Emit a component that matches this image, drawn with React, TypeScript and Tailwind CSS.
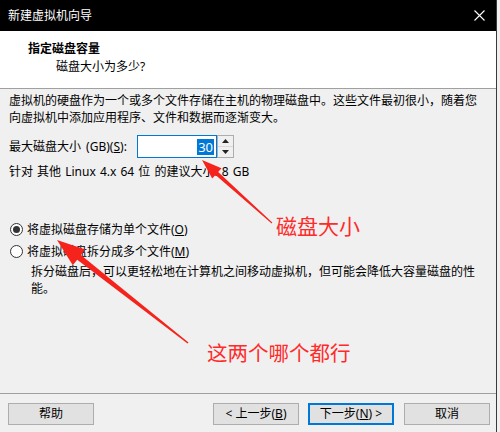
import React from "react";

const FONT = { fontFamily: '"Noto Sans", "Noto Sans CJK SC", sans-serif' };

function arrowPts(tx: number, ty: number, hx: number, hy: number, tailW: number, shaftW: number, headW: number, headL: number) {
  const len = Math.hypot(hx - tx, hy - ty);
  const dx = (hx - tx) / len;
  const dy = (hy - ty) / len;
  const nx = -dy;
  const ny = dx;
  const bx = hx - dx * headL;
  const by = hy - dy * headL;
  const p = (x: number, y: number) => `${x.toFixed(1)},${y.toFixed(1)}`;
  return [
    p(tx + (nx * tailW) / 2, ty + (ny * tailW) / 2),
    p(bx + (nx * shaftW) / 2, by + (ny * shaftW) / 2),
    p(bx + (nx * headW) / 2, by + (ny * headW) / 2),
    p(hx, hy),
    p(bx - (nx * headW) / 2, by - (ny * headW) / 2),
    p(bx - (nx * shaftW) / 2, by - (ny * shaftW) / 2),
    p(tx - (nx * tailW) / 2, ty - (ny * tailW) / 2),
  ].join(" ");
}

function Radio({ checked }: { checked?: boolean }) {
  return (
    <span className="w-[13px] h-[13px] rounded-full border border-[#333] bg-white flex items-center justify-center shrink-0">
      {checked && <span className="w-[7px] h-[7px] rounded-full bg-[#333]" />}
    </span>
  );
}

function Btn({ children, primary }: { children: React.ReactNode; primary?: boolean }) {
  return (
    <div
      className={
        "w-[86px] h-[22px] flex items-center justify-center bg-[#e1e1e1] text-[12px] text-black " +
        (primary ? "border-2 border-[#0078d7]" : "border border-[#adadad]")
      }
    >
      {children}
    </div>
  );
}

export default function App() {
  return (
    <div className="relative w-[500px] h-[432px] flex overflow-hidden bg-[#f0f0f0]" style={FONT}>
      <div className="w-[497px] h-full flex flex-col border-r border-[#3a3a3a]">
        {/* title bar */}
        <div className="h-[31px] bg-black flex items-center justify-between pl-[8px] pr-[11px] text-white text-[12px]">
          <span>新建虚拟机向导</span>
          <svg width="11" height="11" viewBox="0 0 11 11">
            <path d="M0.5 0.5 L10.5 10.5 M10.5 0.5 L0.5 10.5" stroke="white" strokeWidth="1.1" />
          </svg>
        </div>
        {/* header */}
        <div className="h-[58px] bg-white border-b border-[#a0a0a0] flex flex-col text-[12px] text-black">
          <div className="pl-[28px] pt-[9px] font-bold leading-[17px]">指定磁盘容量</div>
          <div className="pl-[56px] pt-[1px] leading-[17px]">磁盘大小为多少?</div>
        </div>
        {/* body */}
        <div className="flex-1 flex flex-col pl-[9px] text-[12px] text-black leading-[17px]">
          <div className="mt-[3px]">
            <div>虚拟机的硬盘作为一个或多个文件存储在主机的物理磁盘中。这些文件最初很小，随着您</div>
            <div>向虚拟机中添加应用程序、文件和数据而逐渐变大。</div>
          </div>
          <div className="mt-[9px] flex items-center h-[23px]">
            <span className="w-[128px] [word-spacing:2px]">
              最大磁盘大小 (GB)(<span className="underline">S</span>):
            </span>
            <div className="w-[80px] h-[23px] bg-white border border-[#0078d7] flex items-center justify-end pr-[2px]">
              <span className="bg-[#0078d7] text-white text-[13px] leading-[16px] px-[1px]">30</span>
            </div>
            <div className="w-[17px] h-[23px] border border-[#adadad] bg-[#f0f0f0] flex flex-col">
              <div className="flex-1 flex items-center justify-center border-b border-[#d8d8d8]">
                <svg width="7" height="4" viewBox="0 0 7 4"><path d="M0 4 L3.5 0 L7 4 Z" fill="#222" /></svg>
              </div>
              <div className="flex-1 flex items-center justify-center">
                <svg width="7" height="4" viewBox="0 0 7 4"><path d="M0 0 L3.5 4 L7 0 Z" fill="#222" /></svg>
              </div>
            </div>
          </div>
          <div className="mt-[5px] [word-spacing:1px]">针对 其他 Linux 4.x 64 位 的建议大小: 8 GB</div>
          <div className="mt-[41px] flex items-center gap-[4px] pl-[1px]">
            <Radio checked />
            <span>
              将虚拟磁盘存储为单个文件(<span className="underline">O</span>)
            </span>
          </div>
          <div className="mt-[5px] flex items-center gap-[4px] pl-[1px]">
            <Radio />
            <span>
              将虚拟磁盘拆分成多个文件(<span className="underline">M</span>)
            </span>
          </div>
          <div className="mt-[3px] pl-[22px]">
            <div>拆分磁盘后，可以更轻松地在计算机之间移动虚拟机，但可能会降低大容量磁盘的性</div>
            <div>能。</div>
          </div>
        </div>
        {/* footer */}
        <div className="h-[39px] border-t border-[#a0a0a0] flex items-start pt-[9px] pl-[8px] text-[12px]">
          <Btn>帮助</Btn>
          <div className="ml-[119px]">
            <Btn>
              &lt; 上一步(<span className="underline">B</span>)
            </Btn>
          </div>
          <div className="ml-[9px]">
            <Btn primary>
              下一步(<span className="underline">N</span>) &gt;
            </Btn>
          </div>
          <div className="ml-[10px]">
            <Btn>取消</Btn>
          </div>
        </div>
      </div>

      {/* annotations */}
      <svg className="absolute left-0 top-0 pointer-events-none" width="500" height="432">
        <polygon points={arrowPts(272, 223, 202, 160, 1, 4, 14, 20)} fill="#f5231c" />
        <polygon points={arrowPts(188, 343, 57, 240, 1.5, 6, 20, 28)} fill="#f5231c" />
      </svg>
      <div className="absolute left-[276px] top-[211px] text-[21px] leading-[28px] text-[#ff2a2a]" style={{ fontFamily: '"Noto Sans CJK SC", sans-serif' }}>磁盘大小</div>
      <div className="absolute left-[207px] top-[338px] text-[20.5px] leading-[28px] text-[#ff2a2a]" style={{ fontFamily: '"Noto Sans CJK SC", sans-serif' }}>这两个哪个都行</div>
    </div>
  );
}
